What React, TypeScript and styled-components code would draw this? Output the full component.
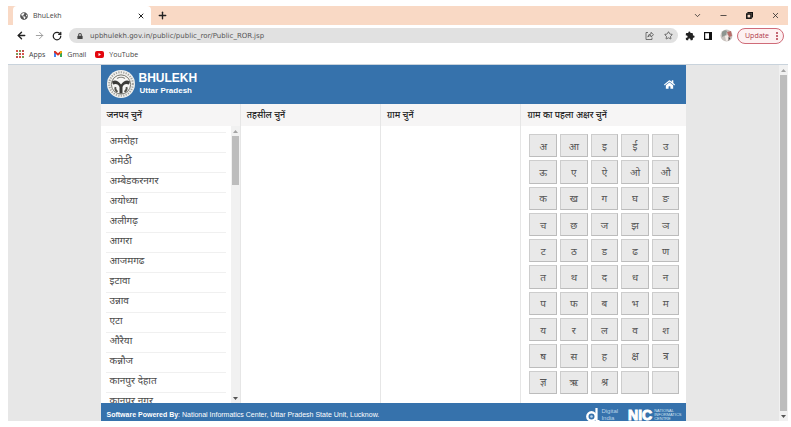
import React from "react";
import styled, { createGlobalStyle, css } from "styled-components";
import { FaGlobeAmericas, FaLock, FaHome } from "react-icons/fa";
import { MdExtension } from "react-icons/md";
import { ArrowLeft, ArrowRight, ChevronDown, Minus, Plus, RotateCw, Star, X } from "lucide-react";

const hindi = `"Noto Sans", "Noto Sans Devanagari", "Lohit Devanagari", sans-serif`;
const blue = "#3672ac";

const GlobalStyle = createGlobalStyle`
  * { box-sizing: border-box; }
  body { margin: 0; background: #fff; }
  button { font: inherit; color: inherit; border: 0; padding: 0; background: none; cursor: pointer; }
  a { color: inherit; text-decoration: none; }
  ul { list-style: none; margin: 0; padding: 0; }
  h1, h2, p { margin: 0; }
  svg { display: block; flex: none; }
`;

const Screen = styled.div`
  display: flex;
  height: 100vh;
  padding: 6px 3px 6px 8px;
  font-family: "Open Sans", sans-serif;
`;

const Browser = styled.div`
  flex: 1;
  min-width: 0;
  display: flex;
  flex-direction: column;
`;

const TabStrip = styled.div`
  display: flex;
  flex: none;
  height: 19px;
  padding-left: 5px;
  background: #f9d9c5;
`;

const Tab = styled.div`
  display: flex;
  align-items: center;
  gap: 5px;
  width: 138px;
  padding: 0 6px 0 7px;
  border-radius: 4px 4px 0 0;
  background: #fff;
  font-size: 7px;
  color: #444;

  span { flex: 1; }
`;

const IconButton = styled.button<{ $w?: number; $color?: string }>`
  display: flex;
  align-items: center;
  justify-content: center;
  flex: none;
  width: ${(p) => p.$w ?? 18}px;
  color: ${(p) => p.$color ?? "#222"};
`;

const WindowControls = styled.div`
  display: flex;
  margin-left: auto;
`;

const Toolbar = styled.div`
  display: flex;
  align-items: center;
  flex: none;
  height: 21px;
  padding: 0 4px;
`;

const AddressBar = styled.div`
  display: flex;
  align-items: center;
  flex: 1;
  height: 15px;
  margin: 0 2px 0 3px;
  padding: 0 0 0 8px;
  border-radius: 8px;
  background: #e1e1e1;
  color: #444;
`;

const AddressInput = styled.input`
  flex: 1;
  min-width: 0;
  border: 0;
  margin-left: 7px;
  padding: 0;
  background: none;
  outline: none;
  font: 7px "DejaVu Sans", sans-serif;
  color: #555;
`;

const UpdateButton = styled.button`
  display: flex;
  align-items: center;
  justify-content: space-between;
  width: 47px;
  height: 16px;
  margin-left: 2px;
  padding: 0 5px 0 7px;
  border: 1px solid #cf6b78;
  border-radius: 8px;
  background: #fdf1f2;
  color: #b0394a;
  font-size: 7px;
`;

const Bookmarks = styled.nav`
  display: flex;
  align-items: center;
  flex: none;
  gap: 9px;
  height: 18px;
  padding: 0 8px 2px;
  font-size: 7px;
  color: #444;

  a { display: flex; align-items: center; gap: 5px; }
`;

const Viewport = styled.div`
  display: flex;
  flex: 1;
  min-height: 0;
  background: #e7e7e7;
  border-top: 1px solid #c9d3dc;
`;

const Page = styled.main`
  display: flex;
  flex-direction: column;
  width: 76%;
  min-height: 0;
  background: #fff;
`;

const PageArea = styled.div`
  display: flex;
  justify-content: center;
  flex: 1;
  min-width: 0;
`;

const Header = styled.header`
  display: flex;
  align-items: center;
  flex: none;
  gap: 4px;
  height: 39px;
  padding: 0 11px 1px 6px;
  background: ${blue};
  color: #fff;
  font-family: "Liberation Sans", Arial, sans-serif;
  font-weight: bold;
`;

const Brand = styled.div`
  flex: 1;

  h1 { font-size: 12px; line-height: 13px; }
  p { padding-left: 1px; font-size: 8px; line-height: 11px; }
`;

const Columns = styled.div`
  display: grid;
  grid-template-columns: 17fr 17fr 17fr 20fr;
  flex: 1;
  min-height: 0;
`;

const Column = styled.section`
  display: flex;
  flex-direction: column;
  min-width: 0;
  min-height: 0;

  &:not(:last-child) { border-right: 1px solid #e6e6e6; }
`;

const ColumnTitle = styled.h2`
  flex: none;
  height: 22px;
  padding-left: 6px;
  background: #f6f5f5;
  font: 500 9px/22px ${hindi};
  color: #222;
  white-space: nowrap;
`;

const ListArea = styled.div`
  display: flex;
  flex: 1;
  min-height: 0;
`;

const DistrictList = styled.ul`
  flex: 1;
  min-height: 0;
  overflow: hidden;
  padding: 6px 5px 0 5px;
`;

const District = styled.li`
  height: 20px;
  border-top: 1px solid #f0f0f0;

  button {
    display: block;
    width: 100%;
    padding-left: 4px;
    text-align: left;
    font: 10px/15px ${hindi};
    color: #4a4a4a;
    white-space: nowrap;
  }
`;

const ScrollTrack = styled.div`
  display: flex;
  flex-direction: column;
  align-items: stretch;
  flex: none;
  width: 9px;
  background: #f1f1f1;
`;

const ScrollArrow = styled.button<{ $faint?: boolean }>`
  display: flex;
  align-items: center;
  justify-content: center;
  flex: none;
  height: 10px;
  color: ${(p) => (p.$faint ? "#a3a3a3" : "#555")};
`;

const ScrollThumb = styled.div<{ $share: number }>`
  flex: ${(p) => p.$share};
  margin: 0 1px;
  background: #bdbdbd;
`;

const ScrollRest = styled.div<{ $share: number }>`
  flex: ${(p) => p.$share};
`;

const KeyGrid = styled.div`
  display: grid;
  grid-template-columns: repeat(5, 1fr);
  grid-template-rows: repeat(10, 1fr);
  gap: 3px;
  flex: 1;
  min-height: 0;
  padding: 8px 7px 9px 8px;
`;

const raised = css`
  border: 1px solid #bcbcbc;
  border-top-color: #cdcdcd;
  border-left-color: #cdcdcd;
`;

const Key = styled.button`
  && {
    ${raised}
    min-height: 0;
    background: #e9e9e9;
    font: 10px/16px ${hindi};
    color: #555;
  }
`;

const Footer = styled.footer`
  display: flex;
  align-items: center;
  flex: none;
  height: 18px;
  padding: 0 5px 0 6px;
  overflow: hidden;
  background: ${blue};
  color: #fff;
  font: 7px/10px "Liberation Sans", Arial, sans-serif;

  p { flex: 1; padding-top: 6px; white-space: nowrap; }
`;

const LogoLink = styled.a`
  display: flex;
  align-items: center;
  gap: 1px;
  margin-left: 10px;
  font-size: 6px;
  line-height: 7px;
  color: #b9d3ea;
`;

const Triangle = ({ down = false }: { down?: boolean }) => (
  <svg width="5" height="3" viewBox="0 0 5 3">
    <path d={down ? "M0 0h5L2.5 3z" : "M0 3h5L2.5 0z"} fill="currentColor" />
  </svg>
);

const Scrollbar = ({ thumb, rest }: { thumb: number; rest: number }) => (
  <ScrollTrack>
    <ScrollArrow type="button" $faint aria-label="Scroll up"><Triangle /></ScrollArrow>
    <ScrollThumb $share={thumb} />
    {rest > 0 && <ScrollRest $share={rest} />}
    <ScrollArrow type="button" aria-label="Scroll down"><Triangle down /></ScrollArrow>
  </ScrollTrack>
);

const Emblem = () => (
  <svg width="28" height="28" viewBox="0 0 28 28" fill="none">
    <circle cx="14" cy="14" r="14" fill="#f1f1ee" />
    <circle cx="14" cy="14" r="11.800" stroke="#a3a39e" strokeWidth="2" strokeDasharray="1.200 1.300" />
    <circle cx="14" cy="14.500" r="9.600" fill="#f7f7f5" stroke="#77776f" strokeWidth="1" />
    <path d="M5 11.500Q9.500 8.500 14 14.500 18.500 8.500 23 11.500L22 14.500Q17 13 15.500 17v6.500h-3V17Q11 13 6 14.500z" fill="#3c3c39" />
    <path d="M8.500 17q-1 3 2 5M19.500 17q1 3-2 5" stroke="#55554f" strokeWidth="1.800" />
    <path d="M10 8.500q4-2.500 8 0" stroke="#85857f" strokeWidth="1.200" />
  </svg>
);

const AppsIcon = () => (
  <svg width="8" height="8" viewBox="0 0 8 8">
    {[0, 1, 2].map((r) =>
      [0, 1, 2].map((c) => (
        <rect key={`${r}${c}`} x={c * 3} y={r * 3} width="2" height="2" fill={["#d9534a", "#7c9b55", "#c0504d"][(r + c) % 3]} />
      ))
    )}
  </svg>
);

const GmailIcon = () => (
  <svg width="8" height="6" viewBox="0 0 8 6">
    <path d="M0 1v5h2V2z" fill="#4285f4" />
    <path d="M8 1v5H6V2z" fill="#34a853" />
    <path d="M0 0h1.500L4 2.200 6.500 0H8v1.500L4 4.800 0 1.500z" fill="#d93025" />
    <path d="M6 .5L8 0v1.500L6 3z" fill="#fbbc04" />
  </svg>
);

const YouTubeIcon = () => (
  <svg width="9" height="7" viewBox="0 0 9 7">
    <rect width="9" height="7" rx="2" fill="#e3060e" />
    <path d="M3.500 2v3L6 3.500z" fill="#fff" />
  </svg>
);

const ShareIcon = () => (
  <svg width="9" height="9" viewBox="0 0 9 9" fill="none" stroke="currentColor" strokeWidth=".8">
    <path d="M3 1.500H1v7h6V6.500M2.800 6q.3-3 3.200-3V1.300L8.500 3.700 6 6V4.500Q4 4.500 2.800 6z" />
  </svg>
);

const RestoreIcon = () => (
  <svg width="7" height="7" viewBox="0 0 7 7" fill="none" stroke="#111">
    <path d="M2 1.200V.6h4.400V5h-.9" strokeWidth="1.200" />
    <rect x=".8" y="2" width="4.200" height="4.200" strokeWidth="1.500" />
  </svg>
);

const SidePanelIcon = () => (
  <svg width="8" height="8" viewBox="0 0 8 8">
    <rect x=".6" y=".6" width="6.800" height="6.800" fill="none" stroke="#111" strokeWidth="1.200" />
    <rect x="5" y="0" width="3" height="8" fill="#111" />
  </svg>
);

const Avatar = () => (
  <svg width="13" height="13" viewBox="0 0 13 13">
    <circle cx="6.500" cy="6.500" r="6" fill="#c9c3bf" />
    <path d="M2 3q3-3 5-1L6 6 2 8z" fill="#8d9691" />
    <path d="M7 3l4-1 1 5-3 1z" fill="#b66c68" />
    <path d="M5 7l3-1 1 5-3 1z" fill="#f4ece7" />
    <path d="M8.500 8l2 1-2 3z" fill="#4f4747" />
  </svg>
);

const DigitalIndiaMark = () => (
  <svg width="14" height="15" viewBox="0 0 14 15" fill="none" stroke="#fff">
    <circle cx="5.500" cy="9.500" r="4.200" strokeWidth="2.400" />
    <path d="M10.500 1v13h3" strokeWidth="2.200" />
    <circle cx="5.500" cy="9.500" r="1.300" fill="#b9d3ea" stroke="none" />
  </svg>
);

const NicWord = styled.strong`
  font: 900 14px/12px "Liberation Sans", Arial, sans-serif;
  color: #fff;
  -webkit-text-stroke: 1px #fff;
`;

const NicCaption = styled.span`
  margin-left: 1px;
  font-size: 4px;
  line-height: 4px;
  color: #d5e4f2;
`;

const LogoGroup = styled.div`
  display: flex;
  align-items: center;
  padding-top: 5px;
`;

const districts = [
  "अमरोहा", "अमेठी", "अम्बेडकरनगर", "अयोध्या", "अलीगढ़", "आगरा", "आजमगढ", "इटावा",
  "उन्नाव", "एटा", "औरैया", "कन्नौज", "कानपुर देहात", "कानपुर नगर",
];

const letters =
  "अ आ इ ई उ ऊ ए ऐ ओ औ क ख ग घ ङ च छ ज झ ञ ट ठ ड ढ ण त थ द ध न प फ ब भ म य र ल व श ष स ह क्ष त्र ज्ञ ऋ श्र".split(" ");
const keys = [...letters, "", ""];

export default function App() {
  return (
    <Screen>
      <GlobalStyle />
      <Browser>
        <TabStrip>
          <Tab>
            <FaGlobeAmericas size={8} color="#555" />
            <span>BhuLekh</span>
            <IconButton type="button" $w={8} aria-label="Close tab"><X size={8} strokeWidth={3} /></IconButton>
          </Tab>
          <IconButton type="button" $w={22} aria-label="New tab"><Plus size={11} strokeWidth={3} /></IconButton>
          <WindowControls>
            <IconButton type="button" $w={26} aria-label="Search tabs"><ChevronDown size={9} /></IconButton>
            <IconButton type="button" $w={26} aria-label="Minimize"><Minus size={9} /></IconButton>
            <IconButton type="button" $w={26} aria-label="Restore"><RestoreIcon /></IconButton>
            <IconButton type="button" $w={26} aria-label="Close"><X size={9} /></IconButton>
          </WindowControls>
        </TabStrip>
        <Toolbar>
          <IconButton type="button" aria-label="Back"><ArrowLeft size={11} strokeWidth={3} /></IconButton>
          <IconButton type="button" $color="#999" aria-label="Forward"><ArrowRight size={11} /></IconButton>
          <IconButton type="button" aria-label="Reload"><RotateCw size={10} strokeWidth={3} /></IconButton>
          <AddressBar>
            <FaLock size={6} />
            <AddressInput aria-label="Address" defaultValue="upbhulekh.gov.in/public/public_ror/Public_ROR.jsp" />
            <IconButton type="button" $w={19} $color="#555" aria-label="Share"><ShareIcon /></IconButton>
            <IconButton type="button" $w={19} $color="#444" aria-label="Bookmark"><Star size={9} /></IconButton>
          </AddressBar>
          <IconButton type="button" $w={19} aria-label="Extensions"><MdExtension size={10} /></IconButton>
          <IconButton type="button" aria-label="Side panel"><SidePanelIcon /></IconButton>
          <IconButton type="button" aria-label="Profile"><Avatar /></IconButton>
          <UpdateButton type="button">
            Update
            <svg width="2" height="8" viewBox="0 0 2 8" fill="currentColor">
              <circle cx="1" cy="1" r="1" /><circle cx="1" cy="4" r="1" /><circle cx="1" cy="7" r="1" />
            </svg>
          </UpdateButton>
        </Toolbar>
        <Bookmarks>
          <a href="#apps"><AppsIcon />Apps</a>
          <a href="#gmail"><GmailIcon />Gmail</a>
          <a href="#youtube"><YouTubeIcon />YouTube</a>
        </Bookmarks>
        <Viewport>
          <PageArea>
            <Page>
              <Header>
                <Emblem />
                <Brand>
                  <h1>BHULEKH</h1>
                  <p>Uttar Pradesh</p>
                </Brand>
                <a href="#home" aria-label="Home"><FaHome size={11} /></a>
              </Header>
              <Columns>
                <Column>
                  <ColumnTitle>जनपद चुनें</ColumnTitle>
                  <ListArea>
                    <DistrictList>
                      {districts.map((name) => (
                        <District key={name}><button type="button">{name}</button></District>
                      ))}
                    </DistrictList>
                    <Scrollbar thumb={19} rest={81} />
                  </ListArea>
                </Column>
                <Column><ColumnTitle>तहसील चुनें</ColumnTitle></Column>
                <Column><ColumnTitle>ग्राम चुनें</ColumnTitle></Column>
                <Column>
                  <ColumnTitle>ग्राम का पहला अक्षर चुनें</ColumnTitle>
                  <KeyGrid>
                    {keys.map((letter, i) => <Key type="button" key={i}>{letter}</Key>)}
                  </KeyGrid>
                </Column>
              </Columns>
              <Footer>
                <p><b>Software Powered By</b>: National Informatics Center, Uttar Pradesh State Unit, Lucknow.</p>
                <LogoGroup>
                  <LogoLink href="#digital-india"><DigitalIndiaMark /><span>Digital<br />India</span></LogoLink>
                  <LogoLink href="#nic">
                    <NicWord>NIC</NicWord>
                    <NicCaption>NATIONAL<br />INFORMATICS<br />CENTRE</NicCaption>
                  </LogoLink>
                </LogoGroup>
              </Footer>
            </Page>
          </PageArea>
          <Scrollbar thumb={1} rest={0} />
        </Viewport>
      </Browser>
    </Screen>
  );
}
